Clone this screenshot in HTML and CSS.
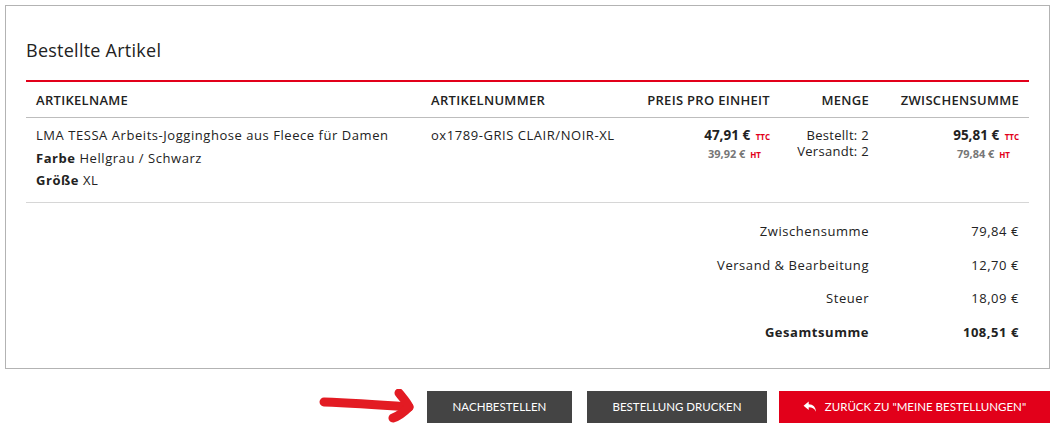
FILE: index.html
```html
<!DOCTYPE html>
<html lang="de">
<head>
  <meta charset="UTF-8">
  <meta name="viewport" content="width=device-width, initial-scale=1.0">
  <title>Bestellung</title>
  <link rel="stylesheet" href="styles.css">
</head>
<body>
  <div class="order-box">
    <h2 class="order-title">Bestellte Artikel</h2>
    <table class="items">
      <colgroup>
        <col class="col-name">
        <col class="col-sku">
        <col class="col-price">
        <col class="col-qty">
        <col class="col-sub">
      </colgroup>
      <thead>
        <tr>
          <th>Artikelname</th>
          <th>Artikelnummer</th>
          <th class="num">Preis pro Einheit</th>
          <th class="num">Menge</th>
          <th class="num">Zwischensumme</th>
        </tr>
      </thead>
      <tbody>
        <tr class="item-row">
          <td>
            <div class="item-name">LMA TESSA Arbeits-Jogginghose aus Fleece für Damen</div>
            <div class="item-opt"><b>Farbe</b> Hellgrau / Schwarz</div>
            <div class="item-opt"><b>Größe</b> XL</div>
          </td>
          <td class="sku">ox1789-GRIS CLAIR/NOIR-XL</td>
          <td class="num">
            <div class="price-ttc">47,91 € <span class="tax">TTC</span></div>
            <div class="price-ht">39,92 € <span class="tax">HT</span></div>
          </td>
          <td class="num qty">
            <div>Bestellt: 2</div>
            <div>Versandt: 2</div>
          </td>
          <td class="num">
            <div class="price-ttc">95,81 € <span class="tax">TTC</span></div>
            <div class="price-ht">79,84 € <span class="tax">HT</span></div>
          </td>
        </tr>
      </tbody>
      <tfoot>
        <tr class="first">
          <td colspan="4">Zwischensumme</td>
          <td>79,84 €</td>
        </tr>
        <tr>
          <td colspan="4">Versand &amp; Bearbeitung</td>
          <td>12,70 €</td>
        </tr>
        <tr>
          <td colspan="4">Steuer</td>
          <td>18,09 €</td>
        </tr>
        <tr class="grand">
          <td colspan="4">Gesamtsumme</td>
          <td>108,51 €</td>
        </tr>
      </tfoot>
    </table>
  </div>

  <div class="actions">
    <svg class="hint-arrow" width="100" height="36" viewBox="0 0 100 36">
      <path d="M5 13 C32 14 62 16 90 18" fill="none" stroke="#e31b23" stroke-width="9" stroke-linecap="round"/>
      <path d="M80 4 C84 9 88 13 90 18 C85 23 80 27 74 29" fill="none" stroke="#e31b23" stroke-width="9" stroke-linecap="round" stroke-linejoin="round"/>
    </svg>
    <button class="btn btn-dark btn-reorder">Nachbestellen</button>
    <button class="btn btn-dark btn-print">Bestellung drucken</button>
    <button class="btn btn-red btn-back">
      <svg width="14" height="12" viewBox="0 0 16 14">
        <path d="M6.5 0.5 L0.5 5.5 L6.5 10.5 V7.3 C10.5 7.3 13 8.6 15 12.5 C14.8 7.2 11.6 3.8 6.5 3.7 Z" fill="#fff"/>
      </svg>
      Zurück zu "Meine Bestellungen"
    </button>
  </div>
</body>
</html>
```

FILE: styles.css
```css
body {
  margin: 0;
  padding: 5px;
  font-family: 'Open Sans', sans-serif;
  color: #222;
  background-color: #fff;
}
.order-box {
  width: 1045px;
  box-sizing: border-box;
  border: 1px solid #b3b3b3;
  padding: 30px 20px 19px;
}
.order-title {
  margin: 0 0 16px;
  font-size: 18px;
  font-weight: 400;
  line-height: 28px;
  letter-spacing: 0.25px;
  color: #222;
}
.items {
  width: 100%;
  table-layout: fixed;
  border-collapse: collapse;
  border-top: 2px solid #e2001a;
  font-size: 13px;
  letter-spacing: 0.55px;
}
.col-name { width: 395px; }
.col-sku { width: 216px; }
.col-price { width: 143px; }
.col-qty { width: 99px; }
.col-sub { width: 150px; }
.items th {
  height: 35px;
  padding: 0 10px;
  text-align: left;
  white-space: nowrap;
  font-size: 13px;
  font-weight: 600;
  text-transform: uppercase;
  letter-spacing: 0.3px;
  border-bottom: 1px solid #bdbdbd;
}
.items .num {
  text-align: right;
}
.item-row td {
  vertical-align: top;
  padding: 6px 10px 10px;
  border-bottom: 1px solid #d6d6d6;
}
.item-name,
.item-opt {
  line-height: 22.5px;
}
.item-opt b {
  font-weight: 700;
}
.sku {
  line-height: 22.5px;
}
.price-ttc {
  margin-top: 2px;
  font-size: 13.5px;
  font-weight: 700;
  line-height: 18px;
  letter-spacing: 0;
}
.price-ht {
  margin-right: 9px;
  font-size: 11px;
  font-weight: 700;
  color: #777;
  line-height: 16px;
  letter-spacing: 0;
}
.tax {
  color: #e2001a;
  font-size: 8px;
  font-weight: 700;
  margin-left: 2px;
}
.qty {
  padding-top: 9px !important;
  line-height: 16px;
  letter-spacing: 0.3px;
}
.items tfoot td {
  height: 33.5px;
  padding: 0 10px;
  text-align: right;
}
.items tfoot tr.first td {
  padding-top: 12px;
  height: 33.5px;
}
.items tfoot tr.grand td {
  font-weight: 700;
}
.actions {
  width: 1045px;
  margin-top: 20px;
  display: flex;
  justify-content: flex-end;
  align-items: center;
}
.hint-arrow {
  margin-right: 8px;
}
.btn {
  height: 32px;
  border: none;
  color: #fff;
  font-family: 'Lato', sans-serif;
  font-size: 11.5px;
  text-transform: uppercase;
  cursor: pointer;
  display: flex;
  align-items: center;
  justify-content: center;
  gap: 8px;
}
.btn-dark {
  background-color: #444;
}
.btn-red {
  background-color: #e2001a;
}
.btn-reorder {
  width: 145px;
  margin-right: 15px;
}
.btn-print {
  width: 180px;
  margin-right: 12px;
}
.btn-back {
  width: 271px;
}
```
